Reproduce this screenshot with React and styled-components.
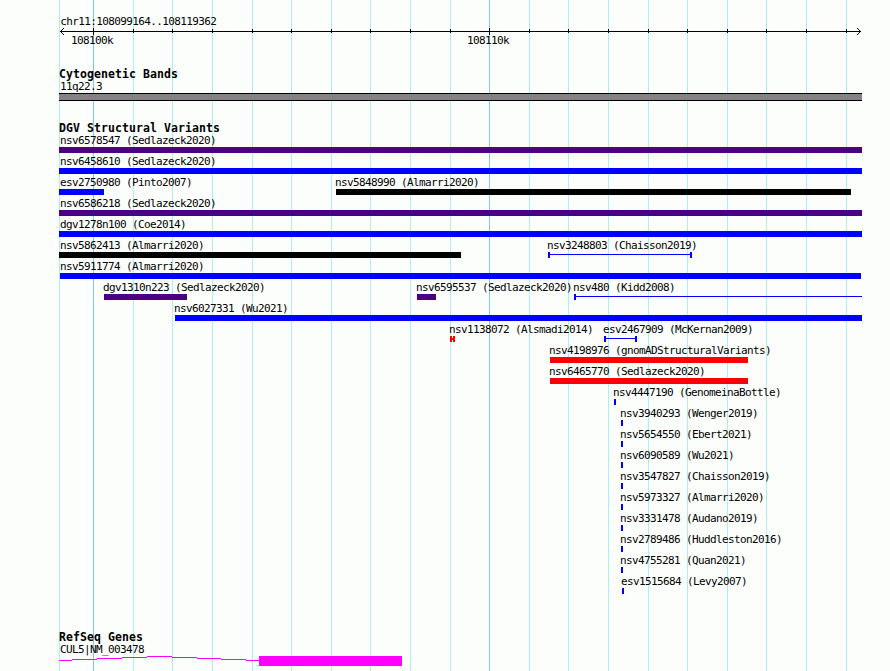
import React from 'react';
import styled, { createGlobalStyle } from 'styled-components';

const GlobalStyle = createGlobalStyle`
	body {
		margin: 0;
		background: #fcfefc;
		overflow: hidden;
	}
`;

const BLUE = '#0000ff';
const INDIGO = '#4b0082';
const BLACK = '#000000';
const RED = '#ff0000';

const MAJOR = [93, 489];
const MINOR = [
	133, 172, 212, 252, 291, 331, 370, 410, 450, 529, 568, 608, 648, 687, 727, 766, 806, 846,
];

const Browser = styled.main`
	position: relative;
	display: flex;
	flex-direction: column;
	width: 890px;
	height: 671px;
	overflow: hidden;
	color: #000;
	font-family: 'DejaVu Sans Mono', monospace;
	font-size: 11px;
`;

const Grid = styled.svg`
	position: absolute;
	inset: 0;
	z-index: -1;
`;

const Section = styled.section`
	display: flex;
	flex-direction: column;
	padding-top: ${(props) => props.$gap}px;
`;

const Title = styled.h2`
	margin: 0 0 0 59px;
	height: 12px;
	font-size: 11.5px;
	font-weight: 700;
	line-height: 12px;
	letter-spacing: 0.077px;
	white-space: pre;
`;

const Label = styled.div`
	height: 13px;
	line-height: ${(props) => props.$line || 13}px;
	letter-spacing: -0.622px;
	white-space: pre;
`;

const Line = styled.div`
	display: grid;
	height: ${(props) => props.$height || 21}px;
`;

const Item = styled.div`
	grid-area: 1 / 1;
	margin-left: ${(props) => props.$left}px;
`;

const Bar = styled.div`
	width: ${(props) => props.$width}px;
	height: ${(props) => props.$height || 6}px;
	margin-left: ${(props) => props.$left || 0}px;
	background: ${(props) => props.$color};
`;

const Band = styled.div`
	box-sizing: border-box;
	width: 803px;
	height: 8px;
	margin-left: 59px;
	border: solid #000;
	border-width: 1px 0;
	background: #848284;
`;

const Drawing = styled.svg`
	display: block;
	shape-rendering: crispEdges;
`;

const span = (name, start, end, color, shape) => ({ name, start, end, color, shape });

const rows = [
	[span('nsv6578547 (Sedlazeck2020)', 59, 862, INDIGO)],
	[span('nsv6458610 (Sedlazeck2020)', 59, 862, BLUE)],
	[
		span('esv2750980 (Pinto2007)', 59, 104, BLUE),
		span('nsv5848990 (Almarri2020)', 336, 851, BLACK),
	],
	[span('nsv6586218 (Sedlazeck2020)', 59, 862, INDIGO)],
	[span('dgv1278n100 (Coe2014)', 59, 862, BLUE)],
	[
		span('nsv5862413 (Almarri2020)', 59, 461, BLACK),
		span('nsv3248803 (Chaisson2019)', 548, 692, BLUE, 'range'),
	],
	[span('nsv5911774 (Almarri2020)', 60, 861, BLUE)],
	[
		span('dgv1310n223 (Sedlazeck2020)', 104, 187, INDIGO),
		span('nsv6595537 (Sedlazeck2020)', 417, 436, INDIGO),
		span('nsv480 (Kidd2008)', 574, 862, BLUE, 'open'),
	],
	[span('nsv6027331 (Wu2021)', 175, 862, BLUE)],
	[
		span('nsv1138072 (Alsmadi2014)', 450, 455, RED, 'range'),
		span('esv2467909 (McKernan2009)', 604, 637, BLUE, 'range'),
	],
	[span('nsv4198976 (gnomADStructuralVariants)', 550, 748, RED)],
	[span('nsv6465770 (Sedlazeck2020)', 550, 748, RED)],
	[span('nsv4447190 (GenomeinaBottle)', 614, 616, BLUE)],
	[span('nsv3940293 (Wenger2019)', 621, 623, BLUE)],
	[span('nsv5654550 (Ebert2021)', 621, 623, BLUE)],
	[span('nsv6090589 (Wu2021)', 621, 623, BLUE)],
	[span('nsv3547827 (Chaisson2019)', 621, 623, BLUE)],
	[span('nsv5973327 (Almarri2020)', 621, 623, BLUE)],
	[span('nsv3331478 (Audano2019)', 621, 623, BLUE)],
	[span('nsv2789486 (Huddleston2016)', 621, 623, BLUE)],
	[span('nsv4755281 (Quan2021)', 621, 623, BLUE)],
	[span('esv1515684 (Levy2007)', 622, 624, BLUE)],
];

const GridLines = () => (
	<Grid width="890" height="671" shapeRendering="crispEdges">
		{[59, ...MINOR].map((x) => (
			<rect key={x} x={x} y="0" width="1" height="671" fill="#afeeee" />
		))}
		{MAJOR.map((x) => (
			<rect key={x} x={x} y="0" width="1" height="671" fill="#87c7e6" />
		))}
	</Grid>
);

const Ruler = () => (
	<Drawing width="890" height="7">
		<rect x="60" y="3" width="801" height="1" />
		{MINOR.map((x) => (
			<rect key={x} x={x} y="1" width="1" height="4" />
		))}
		{MAJOR.map((x) => (
			<rect key={x} x={x} y="0" width="1" height="7" />
		))}
		{[1, 2, 3].map((d) => (
			<g key={d}>
				<rect x={60 + d} y={3 - d} width="1" height="1" />
				<rect x={60 + d} y={3 + d} width="1" height="1" />
				<rect x={860 - d} y={3 - d} width="1" height="1" />
				<rect x={860 - d} y={3 + d} width="1" height="1" />
			</g>
		))}
	</Drawing>
);

const Range = ({ width, color, open }) => (
	<Drawing width={width} height="6" fill={color}>
		<rect x="0" y="0" width="2" height="6" />
		<rect x="0" y="2" width={width} height={width < 6 ? 2 : 1} />
		{!open && <rect x={width - 2} y="0" width="2" height="6" />}
	</Drawing>
);

const Feature = ({ name, start, end, color, shape }) => {
	// labels never start left of the panel's first full pixel
	const left = Math.max(start - 1, 60);
	return (
		<Item $left={left}>
			<Label>{name}</Label>
			{shape ? (
				<Bar $left={start - left} $width={end - start}>
					<Range width={end - start} color={color} open={shape === 'open'} />
				</Bar>
			) : (
				<Bar $left={start - left} $width={end - start} $color={color} />
			)}
		</Item>
	);
};

const Intron = () => (
	<Drawing width="200" height="10" fill="#ff00ff">
		<rect x="0" y="4" width="13" height="1" />
		<rect x="13" y="3" width="25" height="1" />
		<rect x="38" y="2" width="25" height="1" />
		<rect x="63" y="1" width="25" height="1" />
		<rect x="88" y="0" width="25" height="1" />
		<rect x="113" y="1" width="25" height="1" />
		<rect x="138" y="2" width="24" height="1" />
		<rect x="162" y="3" width="25" height="1" />
		<rect x="187" y="4" width="13" height="1" />
	</Drawing>
);

const Gene = styled.div`
	display: flex;
	margin-left: 59px;
`;

const App = () => {
	return (
		<Browser>
			<GlobalStyle />
			<GridLines />
			<Section $gap={15}>
				<Item $left={60.3}>
					<Label>chr11:108099164..108119362</Label>
				</Item>
				<Ruler />
				<Line $height={13}>
					<Item $left={71}>
						<Label $line={11}>108100k</Label>
					</Item>
					<Item $left={467}>
						<Label $line={11}>108110k</Label>
					</Item>
				</Line>
			</Section>
			<Section $gap={20}>
				<Title>Cytogenetic Bands</Title>
				<Item $left={60}>
					<Label>11q22.3</Label>
				</Item>
				<Band />
			</Section>
			<Section $gap={21}>
				<Title>DGV Structural Variants</Title>
				{rows.map((row) => (
					<Line key={row[0].name}>
						{row.map((feature) => (
							<Feature key={feature.name} {...feature} />
						))}
					</Line>
				))}
			</Section>
			<Section $gap={35}>
				<Title>RefSeq Genes</Title>
				<Item $left={60}>
					<Label>CUL5|NM_003478</Label>
				</Item>
				<Gene>
					<Intron />
					<Bar $width={143} $height={10} $color="#ff00ff" />
				</Gene>
			</Section>
		</Browser>
	);
};

export default App;
